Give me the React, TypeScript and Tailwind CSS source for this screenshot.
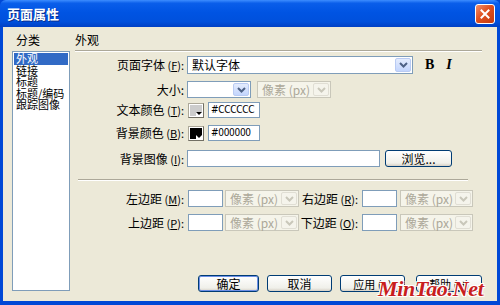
import type { ReactNode } from 'react'

const font = "font-['SimSun','Noto_Sans_CJK_SC',sans-serif]"

function Chevron({ disabled }: { disabled?: boolean }) {
  return (
    <svg width="9" height="6" viewBox="0 0 9 6">
      <path d="M1 1 L4.5 4.5 L8 1" fill="none" stroke={disabled ? '#C9C7BA' : '#4D6185'} strokeWidth="2" />
    </svg>
  )
}

function ArrowBtn({ disabled }: { disabled?: boolean }) {
  return (
    <div
      className={`w-[16px] h-full shrink-0 flex items-center justify-center rounded-[2px] border ${
        disabled
          ? 'border-[#E0DED4] bg-[#F5F4EC]'
          : 'border-[#B9CBF3] bg-[linear-gradient(to_bottom,#E4ECFD,#C3D5FD)]'
      }`}
    >
      <Chevron disabled={disabled} />
    </div>
  )
}

function Select({ w, text, disabled }: { w: string; text?: string; disabled?: boolean }) {
  return (
    <div
      className={`${w} h-full flex items-center border p-[1px] ${
        disabled ? 'border-[#C9C7BA] bg-[#F5F4EA]' : 'border-[#7F9DB9] bg-white'
      }`}
    >
      <span
        className={`flex-1 pl-[3px] text-[12px] leading-[14px] whitespace-nowrap ${
          disabled ? 'text-[#ACA899] text-[11px]' : 'text-black'
        }`}
      >
        {text}
      </span>
      <ArrowBtn disabled={disabled} />
    </div>
  )
}

function Input({ w, text, mono }: { w: string; text?: string; mono?: boolean }) {
  return (
    <div
      className={`${w} h-full flex items-center border border-[#7F9DB9] bg-white pl-[2px] leading-[14px] whitespace-nowrap ${
        mono
          ? "text-[10px] tracking-[-0.3px] font-['DejaVu_Sans_Condensed','Liberation_Sans_Narrow','Liberation_Sans',sans-serif]"
          : 'text-[12px]'
      }`}
    >
      {text}
    </div>
  )
}

function Label({ children, w = 'w-[110px]' }: { children: ReactNode; w?: string }) {
  return <div className={`${w} shrink-0 text-right pr-[1px] text-[12px] leading-[14px] whitespace-nowrap`}>{children}</div>
}

function Key({ k }: { k: string }) {
  return (
    <span className="text-[11px]">
      {' '}(<u>{k}</u>):
    </span>
  )
}

function Swatch({ color }: { color: string }) {
  return (
    <div className="relative w-[16px] h-[15px] border border-t-[#ACA899] border-l-[#ACA899] border-r-[#716F64] border-b-[#716F64] bg-white p-[1px]">
      <div className="w-full h-full" style={{ background: color }} />
      <div className="absolute right-[1px] bottom-[1px] w-[6px] h-[4px] bg-white flex items-center justify-center">
        <div className="w-0 h-0 border-l-[3px] border-r-[3px] border-t-[3px] border-l-transparent border-r-transparent border-t-black" />
      </div>
    </div>
  )
}

function Button({ children, w, def }: { children: ReactNode; w: string; def?: boolean }) {
  return (
    <div
      className={`${w} h-[17px] rounded-[3px] border border-[#003C74] flex items-center justify-center text-[12px] leading-[14px] whitespace-nowrap bg-[linear-gradient(to_bottom,#FFFFFF,#F0F0EA_80%,#D6D0C5)] ${
        def ? 'shadow-[inset_0_0_0_1px_#6D8FE6]' : ''
      }`}
    >
      {children}
    </div>
  )
}

function Sep({ cls }: { cls: string }) {
  return <div className={`${cls} h-[2px] border-t border-t-[#ACA899] border-b border-b-white`} />
}

export default function App() {
  return (
    <div className={`relative w-[500px] h-[305px] flex flex-col bg-[#0048D6] ${font} text-black`}>
      {/* title bar */}
      <div className="h-[27px] shrink-0 flex items-center justify-between pl-[7px] pr-[5px] rounded-t-[6px] bg-[linear-gradient(to_bottom,#3D8DFF_0%,#0A5EEA_12%,#0054E3_45%,#0050DC_80%,#0040C4_100%)]">
        <span className="text-white font-bold text-[13px] leading-none [text-shadow:1px_1px_0_#0A2E8C]">页面属性</span>
        <div className="w-[20px] h-[20px] rounded-[3px] border border-white flex items-center justify-center bg-[linear-gradient(135deg,#F0906E,#E0501F_45%,#C23A10)]">
          <svg width="10" height="10" viewBox="0 0 10 10">
            <path d="M1.5 1.5 L8.5 8.5 M8.5 1.5 L1.5 8.5" stroke="white" strokeWidth="2" strokeLinecap="square" />
          </svg>
        </div>
      </div>

      {/* body */}
      <div className="flex-1 mx-[3px] mb-[4px] bg-[#ECE9D8] flex">
        {/* category list */}
        <div className="w-[72px] shrink-0 pl-[9px] pt-[7px]">
          <div className="pl-[4px] text-[12px] leading-[12px]">分类</div>
          <div className="mt-[5px] w-[58px] h-[240px] border border-[#7F9DB9] bg-white p-[1px] text-[11px] leading-[11.5px] whitespace-nowrap">
            <div className="bg-[#316AC5] text-white pl-[2px]">外观</div>
            <div className="pl-[2px]">链接</div>
            <div className="pl-[2px]">标题</div>
            <div className="pl-[2px]">标题/编码</div>
            <div className="pl-[2px]">跟踪图像</div>
          </div>
        </div>

        {/* appearance panel */}
        <div className="w-[407px] pt-[7px] flex flex-col">
          <div className="text-[12px] leading-[12px]">外观</div>
          <Sep cls="mt-[4px] w-[407px]" />

          <div className="mt-[4px] h-[18px] flex items-center">
            <Label>
              页面字体<Key k="F" />
            </Label>
            <div className="ml-[2px] h-full">
              <Select w="w-[226px]" text="默认字体" />
            </div>
            <span className="ml-[12px] font-['Liberation_Serif',serif] font-bold text-[14px] leading-none">B</span>
            <span className="ml-[12px] font-['Liberation_Serif',serif] font-bold italic text-[14px] leading-none">I</span>
          </div>

          <div className="mt-[7px] h-[17px] flex items-center">
            <Label>大小:</Label>
            <div className="ml-[2px] h-full flex gap-[6px]">
              <Select w="w-[64px]" />
              <Select w="w-[74px]" text="像素 (px)" disabled />
            </div>
          </div>

          <div className="mt-[4px] h-[16px] flex items-center">
            <Label>
              文本颜色<Key k="T" />
            </Label>
            <div className="ml-[3px] h-full flex items-center gap-[4px]">
              <Swatch color="#CCCCCC" />
              <Input w="w-[52px]" text="#CCCCCC" mono />
            </div>
          </div>

          <div className="mt-[7px] h-[16px] flex items-center">
            <Label>
              背景颜色<Key k="B" />
            </Label>
            <div className="ml-[3px] h-full flex items-center gap-[4px]">
              <Swatch color="#000000" />
              <Input w="w-[52px]" text="#000000" mono />
            </div>
          </div>

          <div className="mt-[9px] h-[17px] flex items-center">
            <Label>
              背景图像<Key k="I" />
            </Label>
            <div className="ml-[2px] h-full flex items-center">
              <Input w="w-[193px]" />
              <div className="ml-[5px]">
                <Button w="w-[67px]">浏览...</Button>
              </div>
            </div>
          </div>

          <Sep cls="mt-[12px] ml-[3px] w-[390px]" />

          <div className="mt-[9px] h-[17px] flex items-center">
            <Label>
              左边距<Key k="M" />
            </Label>
            <div className="ml-[3px] h-full flex gap-[2px]">
              <Input w="w-[35px]" />
              <Select w="w-[74px]" text="像素 (px)" disabled />
            </div>
            <Label w="w-[60px]">
              右边距<Key k="R" />
            </Label>
            <div className="ml-[3px] h-full flex gap-[3px]">
              <Input w="w-[35px]" />
              <Select w="w-[73px]" text="像素 (px)" disabled />
            </div>
          </div>

          <div className="mt-[7px] h-[17px] flex items-center">
            <Label>
              上边距<Key k="P" />
            </Label>
            <div className="ml-[3px] h-full flex gap-[2px]">
              <Input w="w-[35px]" />
              <Select w="w-[74px]" text="像素 (px)" disabled />
            </div>
            <Label w="w-[60px]">
              下边距<Key k="O" />
            </Label>
            <div className="ml-[3px] h-full flex gap-[3px]">
              <Input w="w-[35px]" />
              <Select w="w-[73px]" text="像素 (px)" disabled />
            </div>
          </div>

          <div className="mt-[44px] ml-[123px] flex">
            <Button w="w-[67px]" def>
              确定
            </Button>
            <div className="ml-[8px]">
              <Button w="w-[65px]">取消</Button>
            </div>
            <div className="ml-[8px]">
              <Button w="w-[65px]">
                <span className="text-[11px]">
                  应用 (<u>A</u>)
                </span>
              </Button>
            </div>
            <div className="ml-[11px]">
              <Button w="w-[66px]">
                <span className="text-[11px]">
                  帮助 (<u>H</u>)
                </span>
              </Button>
            </div>
          </div>
        </div>
      </div>

      {/* watermark */}
      <div className="absolute left-[378px] top-[278px] font-['Liberation_Serif',serif] italic font-bold text-[22px] leading-none tracking-[-0.3px] text-[#C81E1E] [text-shadow:1px_1px_0_#FFFFFF,-1px_-1px_0_#FFFFFF,1px_-1px_0_#FFFFFF,-1px_1px_0_#FFFFFF]">
        MinTao.Net
      </div>
    </div>
  )
}
